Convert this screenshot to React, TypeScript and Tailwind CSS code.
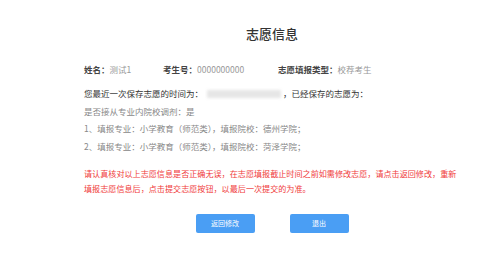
export default function App() {
  const font = { fontFamily: '"Noto Sans CJK SC", "Noto Sans", sans-serif' };
  return (
    <div style={font} className="w-[499px] h-[271px] bg-white overflow-hidden">
      <div className="ml-[84px] w-[376px] pt-[25px]">
        <h1 className="text-center text-[13px] leading-[18px] font-medium text-[#333]">志愿信息</h1>

        <div className="flex mt-[19px] text-[8.5px] leading-[14px]">
          <div className="w-[79px]">
            <span className="font-bold text-[#444]">姓名：</span>
            <span className="text-[#999]">测试1</span>
          </div>
          <div className="w-[115px]">
            <span className="font-bold text-[#444]">考生号：</span>
            <span className="text-[#999]">0000000000</span>
          </div>
          <div>
            <span className="font-bold text-[#444]">志愿填报类型：</span>
            <span className="text-[#999]">校荐考生</span>
          </div>
        </div>

        <div className="mt-[9px] text-[8.5px] leading-[17.5px]">
          <div className="flex items-center text-[#333]">
            <span>您最近一次保存志愿的时间为：</span>
            <span className="ml-[4px] inline-block w-[74px] h-[8px] bg-[#e6e6e6] blur-[1.5px]" />
            <span className="ml-[2px]">，已经保存的志愿为：</span>
          </div>
          <div className="text-[#888]">是否接从专业内院校调剂：是</div>
          <div className="text-[#888]">1、填报专业：小学教育（师范类），填报院校：德州学院；</div>
          <div className="text-[#888]">2、填报专业：小学教育（师范类），填报院校：菏泽学院；</div>
        </div>

        <p className="mt-[10.5px] text-[8.1px] leading-[15px] text-[#f03a3a]">
          请认真核对以上志愿信息是否正确无误，在志愿填报截止时间之前如需修改志愿，请点击返回修改，重新填报志愿信息后，点击提交志愿按钮，以最后一次提交的为准。
        </p>

        <div className="flex justify-center gap-[35px] mt-[18.5px]">
          <button className="w-[59px] h-[19px] rounded-[2px] bg-[#4a9ef4] text-white text-[7px] leading-[19px]">
            返回修改
          </button>
          <button className="w-[59px] h-[19px] rounded-[2px] bg-[#4a9ef4] text-white text-[7px] leading-[19px]">
            退出
          </button>
        </div>
      </div>
    </div>
  );
}
